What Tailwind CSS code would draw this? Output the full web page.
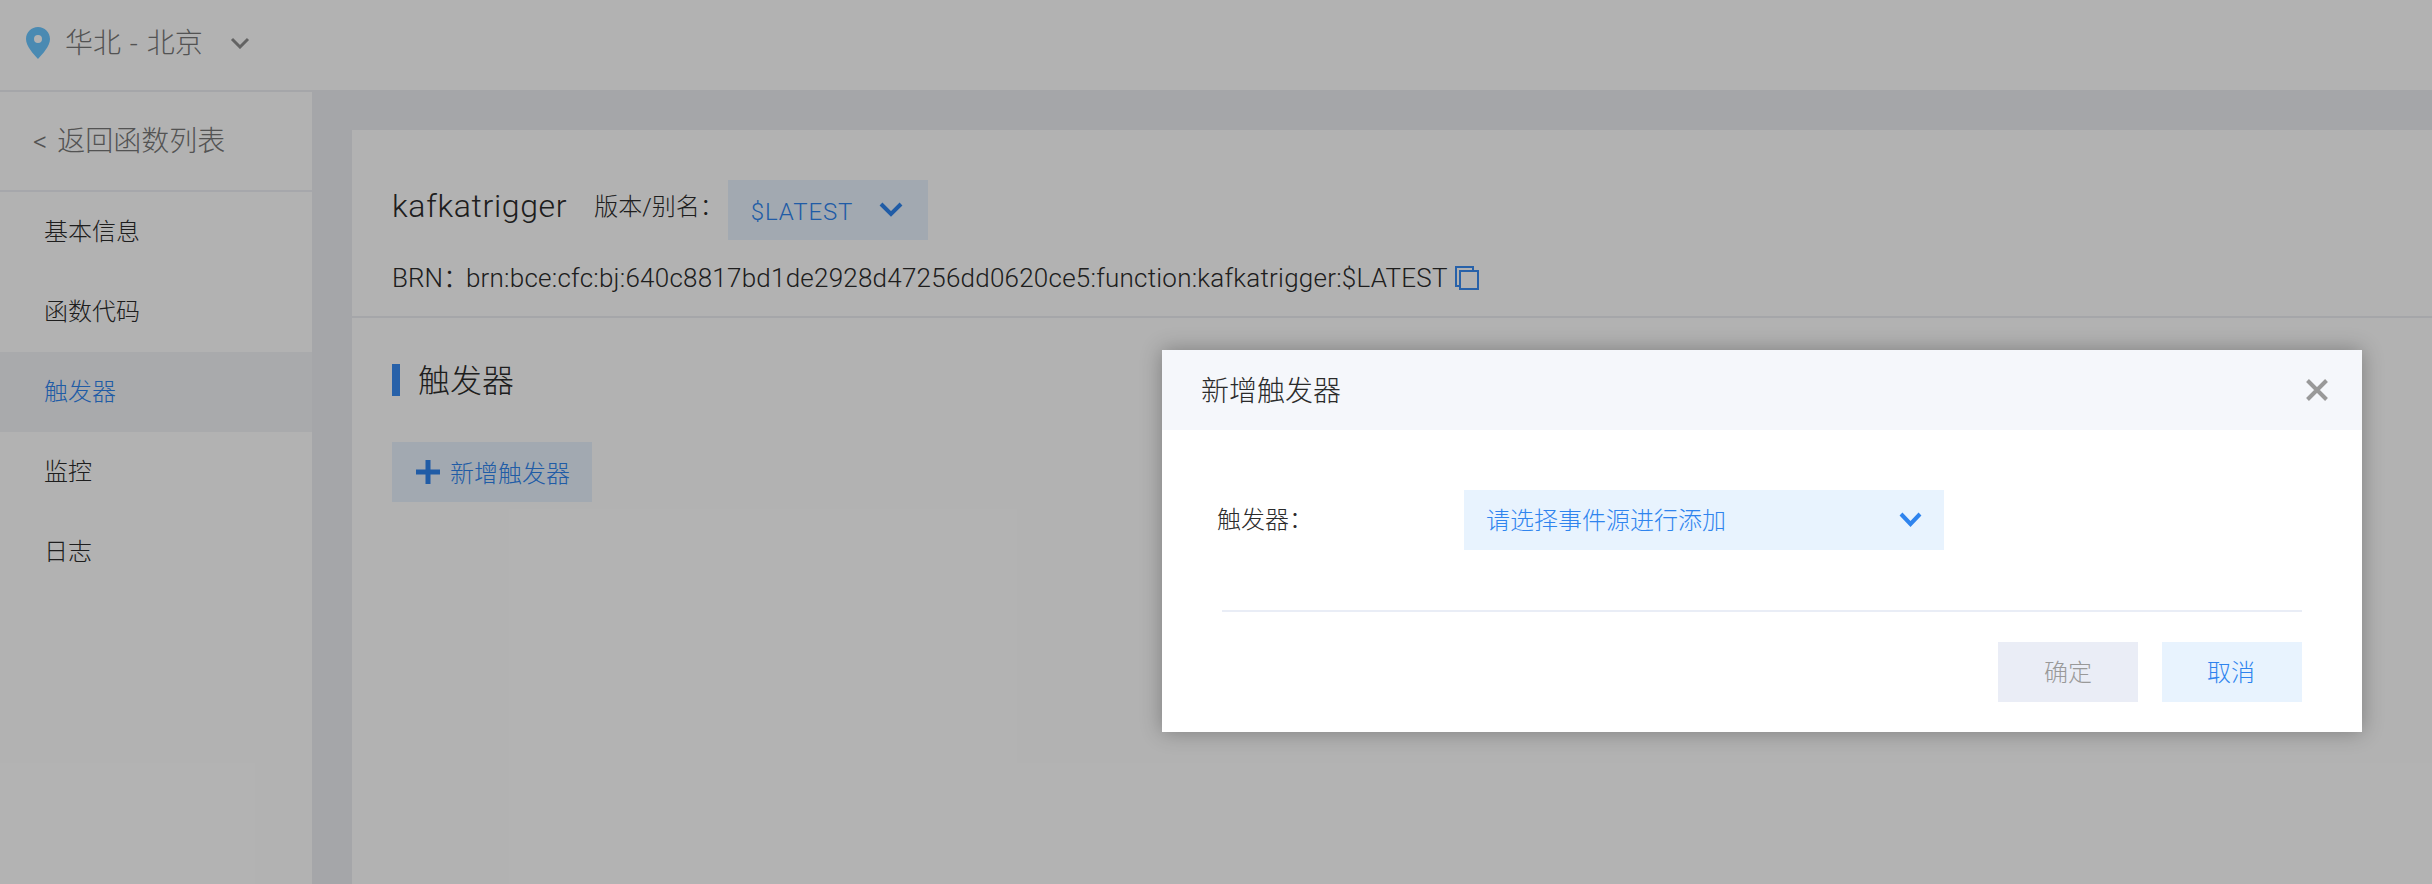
<!DOCTYPE html>
<html lang="zh-CN">
<head>
<meta charset="utf-8">
<script src="https://cdn.jsdelivr.net/npm/@tailwindcss/browser@4"></script>
</head>
<body class="m-0">
<div class="relative w-[2432px] h-[884px] overflow-hidden bg-[#eceef2] text-[#2b2b2b] font-['Roboto','Noto_Sans_CJK_SC',sans-serif] font-light">
  <header class="flex items-center h-[92px] bg-white border-b-2 border-[#eceef2] pl-[26px] pb-[4px] text-[28px] text-[#777]">
    <svg class="w-[24px] h-[32px]" viewBox="0 0 24 32"><path fill="#6bc6ff" fill-rule="evenodd" d="M12 0C5.400 0 0 5.300 0 11.900 0 19 7.500 27 12 32c4.500-5 12-13 12-20.100C24 5.300 18.600 0 12 0zm0 8a4 4 0 1 1 0 8 4 4 0 0 1 0-8z"/></svg>
    <span class="ml-[15px] pt-[1px] [word-spacing:2px]">华北 - 北京</span>
    <svg class="ml-[27px] w-[20px] h-[12px]" viewBox="0 0 20 12"><path fill="none" stroke="#8f8f8f" stroke-width="3" d="M2 2l8 8 8-8"/></svg>
  </header>
  <div class="flex h-[792px]">
    <aside class="w-[312px] shrink-0 bg-white text-[24px]">
      <div class="flex items-center h-[100px] pl-[33px] pt-[2px] text-[28px] text-[#777] border-b-2 border-[#eef0f5] [word-spacing:3px]">&lt; 返回函数列表</div>
      <nav class="flex flex-col">
        <div class="flex items-center h-[80px] pl-[44px]">基本信息</div>
        <div class="flex items-center h-[80px] pl-[44px]">函数代码</div>
        <div class="flex items-center h-[80px] pl-[44px] bg-[#f3f4f6] text-[#2f84ee]">触发器</div>
        <div class="flex items-center h-[80px] pl-[44px]">监控</div>
        <div class="flex items-center h-[80px] pl-[44px]">日志</div>
      </nav>
    </aside>
    <main class="flex-1 pl-[40px] pt-[38px]">
      <section class="h-full bg-white">
        <div class="h-[188px] pl-[40px] pt-[50px] border-b-2 border-[#eceef2]">
          <div class="flex items-center h-[60px]">
            <h1 class="text-[32px] font-light pb-[8px] tracking-[0.65px]">kafkatrigger</h1>
            <span class="ml-[27px] text-[24px] pb-[6px]">版本/别名：</span>
            <div class="ml-[4px] flex items-center w-[200px] h-[60px] pl-[23px] bg-[#e8f3fe] text-[24px] text-[#2f84ee] tracking-[0.9px]">
              <span class="pt-[3px]">$LATEST</span>
              <svg class="ml-[26px] w-[24px] h-[16px]" viewBox="0 0 24 16"><path fill="none" stroke="#2f84ee" stroke-width="4" d="M2 2l10 10L22 2"/></svg>
            </div>
          </div>
          <div class="flex items-center mt-[21px] h-[34px] text-[26px]">
            <span class="-mr-[3px]">BRN：</span>
            <span class="tracking-[0.23px]">brn:bce:cfc:bj:640c8817bd1de2928d47256dd0620ce5:function:kafkatrigger:$LATEST</span>
            <svg class="ml-[7px] w-[24px] h-[24px]" viewBox="0 0 24 24"><rect x="1" y="1" width="17" height="19" fill="none" stroke="#388cf2" stroke-width="2"/><rect x="5" y="5" width="18" height="18" fill="#fff" stroke="#388cf2" stroke-width="2"/></svg>
          </div>
        </div>
        <div class="pl-[40px] pt-[46px]">
          <div class="flex items-center h-[32px]">
            <span class="w-[8px] h-[32px] bg-[#388cf2]"></span>
            <h2 class="ml-[18px] pt-[2px] text-[32px] font-light">触发器</h2>
          </div>
          <button class="flex items-center w-[200px] h-[60px] mt-[46px] pl-[24px] bg-[#e8f3fe] text-[24px] text-[#2f84ee] font-light">
            <svg class="w-[24px] h-[24px]" viewBox="0 0 24 24"><path fill="none" stroke="#2f84ee" stroke-width="5" d="M12 0v24M0 12h24"/></svg>
            <span class="ml-[10px] pt-[4px]">新增触发器</span>
          </button>
        </div>
      </section>
    </main>
  </div>

  <div class="absolute inset-0 bg-black/30"></div>

  <div class="absolute left-[1162px] top-[350px] w-[1200px] h-[382px] bg-white shadow-[0_0_20px_rgba(0,0,0,0.3)]">
    <div class="flex items-center justify-between h-[80px] pl-[39px] pr-[34px] bg-[#f5f7fb]">
      <span class="pt-[3px] text-[28px] text-[#2b2b2b]">新增触发器</span>
      <svg class="w-[22px] h-[22px]" viewBox="0 0 22 22"><path fill="none" stroke="#999" stroke-width="4" d="M1.500 1.500l19 19M20.500 1.500l-19 19"/></svg>
    </div>
    <div class="px-[60px]">
      <div class="flex items-center h-[60px] mt-[60px]">
        <label class="w-[247px] -ml-[5px] text-[24px] text-[#2b2b2b]">触发器：</label>
        <div class="flex items-center justify-between w-[480px] h-[60px] pl-[22px] pr-[22px] bg-[#e8f3fe] text-[24px] text-[#2f84ee]">
          <span class="pt-[2px]">请选择事件源进行添加</span>
          <svg class="w-[23px] h-[16px]" viewBox="0 0 23 16"><path fill="none" stroke="#2f84ee" stroke-width="4" d="M2 2l9.500 10L21 2"/></svg>
        </div>
      </div>
      <div class="h-[2px] mt-[60px] bg-[#e9edf6]"></div>
      <div class="flex justify-end gap-[24px] mt-[30px]">
        <button class="w-[140px] h-[60px] pt-[2px] bg-[#eaedf6] text-[24px] text-[#999] font-light">确定</button>
        <button class="w-[140px] h-[60px] pt-[2px] pr-[2px] bg-[#e8f3fe] text-[24px] text-[#2f84ee] font-light">取消</button>
      </div>
    </div>
  </div>
</div>
</body>
</html>
